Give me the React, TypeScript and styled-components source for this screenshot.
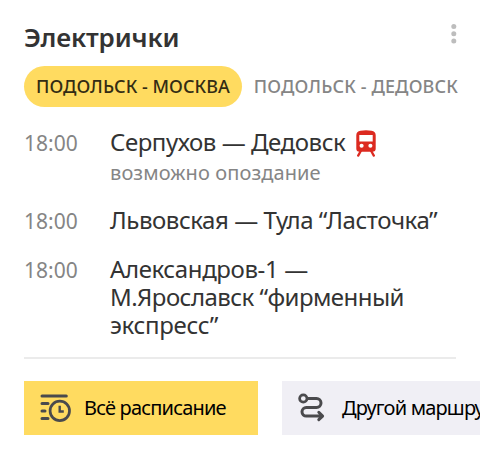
import React from 'react';
import styled, { createGlobalStyle } from 'styled-components';

const GlobalStyle = createGlobalStyle`
  * { box-sizing: border-box; }
  body {
    margin: 0;
    background: #fff;
    font-family: "Noto Sans", sans-serif;
    color: #333;
    overflow: hidden;
  }
`;

const Card = styled.main`
  width: 480px;
  height: 456px;
  padding: 20px 0 0 24px;
  overflow: hidden;
  background: #fff;
`;

const Header = styled.header`
  display: flex;
  justify-content: space-between;
  align-items: flex-start;
  height: 46px;
  padding-right: 23px;
`;

const Title = styled.h1`
  margin: 0;
  font-size: 26px;
  font-weight: 600;
  line-height: 34px;
  letter-spacing: -0.15px;
`;

const MenuButton = styled.button`
  display: flex;
  margin: 3px 0 0;
  padding: 0;
  border: 0;
  background: none;
`;

const Tabs = styled.nav`
  display: flex;
  height: 41px;
`;

const Tab = styled.button<{ $active?: boolean }>`
  height: 41px;
  padding: 0 12px;
  border: 0;
  border-radius: 21px;
  background: ${(p) => (p.$active ? '#ffdb60' : 'transparent')};
  color: ${(p) => (p.$active ? '#332c13' : '#858585')};
  font: 500 18px/41px "Noto Sans", sans-serif;
  letter-spacing: ${(p) => (p.$active ? '0.04px' : '0.14px')};
  white-space: nowrap;
`;

const Trains = styled.ul`
  display: flex;
  flex-direction: column;
  gap: 21px;
  width: 432px;
  height: 252px;
  margin: 0;
  padding: 21px 0 0;
  border-bottom: 2px solid #ebebeb;
  list-style: none;
`;

const Train = styled.li`
  display: grid;
  grid-template-columns: 86px 326px;
`;

const Time = styled.time`
  height: 28px;
  color: #858585;
  font-size: 21px;
  line-height: 30px;
`;

const Route = styled.div`
  font-size: 24px;
  line-height: 28px;
  letter-spacing: -0.45px;
  white-space: nowrap;
`;

const RouteLine = styled.div<{ $spacing?: number }>`
  display: flex;
  align-items: center;
  gap: 11px;
  height: 28px;
  letter-spacing: ${(p) => p.$spacing ?? -0.45}px;
`;

const Note = styled.div`
  height: 29px;
  color: #858585;
  font-size: 20px;
  line-height: 33px;
  letter-spacing: 0.1px;
`;

const Actions = styled.footer`
  display: flex;
  gap: 24px;
  margin-top: 22px;
`;

const Action = styled.button<{ $primary?: boolean }>`
  display: flex;
  flex: 0 0 234px;
  align-items: center;
  gap: 12px;
  height: 54px;
  padding: 0 0 0 16px;
  border: 0;
  background: ${(p) => (p.$primary ? '#ffdb60' : '#f0eff5')};
  color: #000;
  font: 400 20px/54px "Noto Sans", sans-serif;
  letter-spacing: -0.82px;
  white-space: nowrap;
`;

const DotsIcon = () => (
  <svg width="6" height="22" viewBox="0 0 6 22" fill="#bdbdbd">
    <circle cx="2.800" cy="3.500" r="2.500" />
    <circle cx="2.800" cy="10.700" r="2.500" />
    <circle cx="2.800" cy="17.900" r="2.500" />
  </svg>
);

const TrainIcon = () => (
  <svg width="20" height="29" viewBox="0 0 20 29">
    <path
      fill="#dc2a20"
      fillRule="evenodd"
      d="M4.500 2.700Q10 1.800 15.500 2.700Q19.700 3.200 19.700 7.200V20.500Q19.700 23.700 16.500 23.700H3.500Q.3 23.700 .3 20.500V7.200Q.3 3.200 4.500 2.700ZM3.300 7V13.500H16.700V7ZM5.600 15.700a2.050 2.050 0 1 0 0 4.100a2.050 2.050 0 0 0 0-4.100ZM14.400 15.700a2.050 2.050 0 1 0 0 4.100a2.050 2.050 0 0 0 0-4.100Z"
    />
    <path d="M4.800 23L2.200 27.600M15.200 23L17.800 27.600" stroke="#dc2a20" strokeWidth="2.300" strokeLinecap="round" />
  </svg>
);

const ScheduleIcon = () => (
  <svg width="32" height="32" viewBox="0 0 32 32" fill="none" stroke="#4a4a4d" strokeLinecap="round">
    <path d="M2 4H26.300M2 11.500H8M2 19H5M2 26.500H8" strokeWidth="3" />
    <circle cx="19.800" cy="18.900" r="9.700" strokeWidth="2.700" />
    <path d="M19.700 13.800V19.500H23.800" strokeWidth="2.400" strokeLinecap="butt" />
  </svg>
);

const RouteIcon = () => (
  <svg width="32" height="32" viewBox="0 0 32 32" fill="none" stroke="#4a4a4d" strokeWidth="3" strokeLinecap="round" strokeLinejoin="round">
    <circle cx="5.300" cy="6.500" r="3.700" strokeWidth="2.700" />
    <path d="M9.500 6.500H18.500a4.500 4.500 0 0 1 0 9H8.300a4.300 4.300 0 0 0 0 8.600H24M20.800 20.300L24.600 24.100L20.800 27.700" />
  </svg>
);

export default function App() {
  return (
    <>
      <GlobalStyle />
      <Card>
        <Header>
          <Title>Электрички</Title>
          <MenuButton aria-label="Меню"><DotsIcon /></MenuButton>
        </Header>
        <Tabs>
          <Tab $active>ПОДОЛЬСК - МОСКВА</Tab>
          <Tab>ПОДОЛЬСК - ДЕДОВСК</Tab>
        </Tabs>
        <Trains>
          <Train>
            <Time>18:00</Time>
            <Route>
              <RouteLine>Серпухов — Дедовск<TrainIcon /></RouteLine>
              <Note>возможно опоздание</Note>
            </Route>
          </Train>
          <Train>
            <Time>18:00</Time>
            <Route>
              <RouteLine>Львовская — Тула “Ласточка”</RouteLine>
            </Route>
          </Train>
          <Train>
            <Time>18:00</Time>
            <Route>
              <RouteLine $spacing={-0.38}>Александров-1 —</RouteLine>
              <RouteLine $spacing={-0.55}>М.Ярославск “фирменный</RouteLine>
              <RouteLine $spacing={-0.3}>экспресс”</RouteLine>
            </Route>
          </Train>
        </Trains>
        <Actions>
          <Action $primary><ScheduleIcon />Всё расписание</Action>
          <Action><RouteIcon />Другой маршрут</Action>
        </Actions>
      </Card>
    </>
  );
}
